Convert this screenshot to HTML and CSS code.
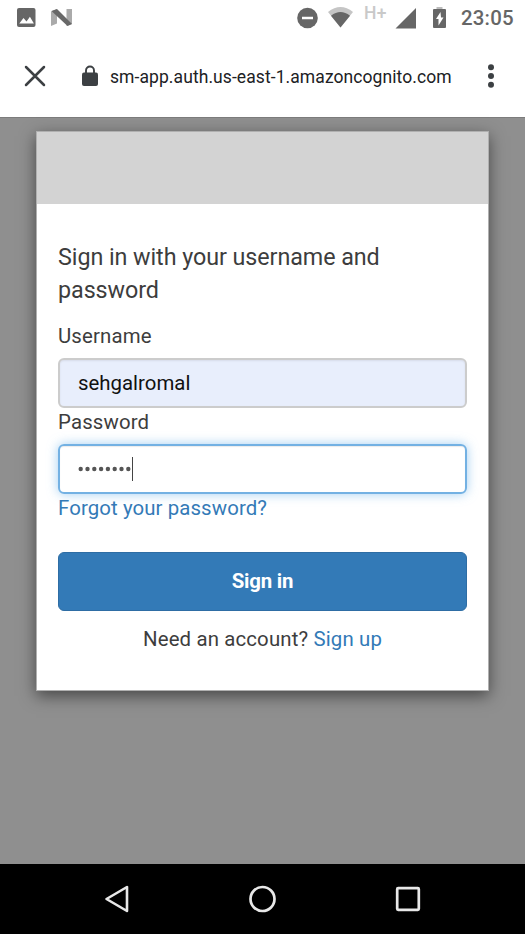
FILE: index.html
```html
<!DOCTYPE html>
<html lang="en">
<head>
<meta charset="utf-8">
<title>Sign in</title>
<link rel="stylesheet" href="styles.css">
</head>
<body>
<header class="chrome">
  <div class="status">
    <svg class="status-left" width="60" height="36" viewBox="0 0 60 36">
      <rect x="1" y="8" width="18.5" height="19" rx="2" fill="#666"/>
      <path d="M3.3 23.5 7.5 18l3 3.6 3.4-4.8 4 6.7z" fill="#fff"/>
      <path d="M35 11.5 41 9v14.500L35 26zM50.500 9h5.500v15l-5.500 2z" fill="#aaa"/>
      <path d="M35.500 11 41 9l15 15-4.500 2z" fill="#686868"/>
    </svg>
    <svg class="status-signal" width="66" height="36" viewBox="0 0 66 36">
      <circle cx="10.500" cy="18" r="10.300" fill="#666"/>
      <path d="M5 18h11" stroke="#fff" stroke-width="2.500"/>
      <path d="M31 12q12.500-10 25 0L43.500 27.500z" fill="#c5c5c5"/>
      <path d="M34 15.700q9.500-7.500 19 0L43.500 27.500z" fill="#666"/>
    </svg>
    <span class="network">H+</span>
    <svg class="status-power" width="54" height="36" viewBox="0 0 54 36">
      <path d="M-.500 28.500 20 8v20.500z" fill="#666"/>
      <path d="M40.500 7h6v2.500h-6z" fill="#bbb"/>
      <rect x="37" y="9" width="13" height="19" rx="1" fill="#666"/>
      <path d="m44.500 12-4.500 7h2.500v6.500l5-8h-2.500z" fill="#fff"/>
    </svg>
    <span class="clock">23:05</span>
  </div>
  <div class="toolbar">
    <svg class="close" width="22" height="22" viewBox="0 0 22 22"><path d="M2 2l18 18M20 2 2 20" stroke="#3c4043" stroke-width="2.500" stroke-linecap="round"/></svg>
    <svg class="lock" width="16" height="22" viewBox="0 0 16 22"><path d="M4 9V5.500a4 4 0 0 1 8 0V9" fill="none" stroke="#3c4043" stroke-width="1.900"/><rect y="7.500" width="16" height="13.500" rx="2" fill="#3c4043"/></svg>
    <span class="url">sm-app.auth.us-east-1.amazoncognito.com</span>
    <svg class="more" width="6" height="24" viewBox="0 0 6 24" fill="#3c4043"><circle cx="3" cy="3.200" r="3"/><circle cx="3" cy="12" r="3"/><circle cx="3" cy="20.800" r="3"/></svg>
  </div>
</header>
<main class="page">
  <section class="card">
    <div class="banner"></div>
    <form class="form">
      <h1 class="title">Sign in with your username and<br>password</h1>
      <label class="label first">Username</label>
      <div class="field filled"><span class="user">sehgalromal</span></div>
      <label class="label">Password</label>
      <div class="field focused"><svg class="dots" width="54" height="24" viewBox="0 0 54 24" fill="#555"><circle cx="2.700" cy="12" r="2.200"/><circle cx="9.500" cy="12" r="2.200"/><circle cx="16.300" cy="12" r="2.200"/><circle cx="23.100" cy="12" r="2.200"/><circle cx="29.900" cy="12" r="2.200"/><circle cx="36.700" cy="12" r="2.200"/><circle cx="43.500" cy="12" r="2.200"/><circle cx="50.300" cy="12" r="2.200"/></svg><i class="caret"></i></div>
      <a class="forgot">Forgot your password?</a>
      <button class="submit" type="button">Sign in</button>
      <p class="signup">Need an account? <a>Sign up</a></p>
    </form>
  </section>
</main>
<nav class="navbar">
  <svg width="26" height="30" viewBox="0 0 26 30"><path d="M23 3v24L2.500 15z" fill="none" stroke="#e8e8e8" stroke-width="2.600" stroke-linejoin="round"/></svg>
  <svg width="28" height="28" viewBox="0 0 28 28"><circle cx="13.500" cy="14" r="12" fill="none" stroke="#e8e8e8" stroke-width="2.700"/></svg>
  <svg width="26" height="26" viewBox="0 0 26 26"><rect x="2.200" y="2.200" width="21.600" height="21.600" rx="1" fill="none" stroke="#e8e8e8" stroke-width="2.700"/></svg>
</nav>
</body>
</html>
```
FILE: styles.css
```css
* { box-sizing: border-box; }
body {
  margin: 0;
  width: 525px;
  height: 934px;
  display: flex;
  flex-direction: column;
  overflow: hidden;
  font-family: Roboto, sans-serif;
  font-size: 20.4px;
  color: #3d3d3d;
}
svg { display: block; flex: none; overflow: visible; }
.chrome { height: 117px; background: #fff; }
.status { height: 36px; display: flex; padding-left: 16px; }
.status-signal { margin-left: 221px; }
.network { width: 33px; padding-left: 1px; font-size: 17.5px; font-weight: 500; line-height: 26px; color: #c9c9c9; letter-spacing: .4px; }
.clock { margin-left: 11px; font-size: 20.4px; font-weight: 500; line-height: 36px; color: #666; letter-spacing: .2px; }
.toolbar { height: 80px; display: flex; align-items: center; padding-left: 24px; }
.lock { margin-left: 36px; }
.url { width: 370px; margin-left: 12px; padding-top: 2px; font-size: 17.5px; letter-spacing: .08px; color: #202124; white-space: nowrap; }
.more { margin-left: 8px; }
.page { height: 747px; background: #8f8f8f; border-top: 1px solid #7c7c7c; padding: 13px 36px 0; }
.card {
  width: 453px;
  height: 560px;
  background: #fff;
  border: 1px solid #b0b0b0;
  box-shadow: 0 5px 15px rgba(0, 0, 0, .5);
}
.banner { height: 72px; background: #d3d3d3; }
.form { padding: 37px 21px 0; }
.title { margin: 0; font-size: 23.3px; font-weight: 400; line-height: 33px; letter-spacing: -.06px; }
.label { display: block; line-height: 29px; height: 36px; letter-spacing: .14px; }
.label.first { margin-top: 15px; }
.field {
  height: 50px;
  display: flex;
  align-items: center;
  padding-left: 18px;
  border: 2px solid #ccc;
  border-radius: 6px;
}
.filled { background: #e8eefc; color: #111; box-shadow: inset 0 1px 2px rgba(0, 0, 0, .08); }
.focused { border-color: #73b1e3; box-shadow: 0 0 11px rgba(102, 175, 233, .6), inset 0 1px 1px rgba(0, 0, 0, .08); }
.caret { width: 1px; height: 24px; background: #444; }
.forgot { display: block; line-height: 29px; letter-spacing: .1px; }
a { color: #337ab7; }
.submit {
  display: block;
  width: 100%;
  height: 59px;
  margin-top: 29px;
  padding: 0 0 1px;
  border: 1px solid #2e6da4;
  border-radius: 6px;
  background: #337ab7;
  color: #fff;
  font: 700 20.4px Roboto, sans-serif;
  letter-spacing: -.2px;
}
.signup { margin: 14px 0 0; text-align: center; line-height: 29px; letter-spacing: .14px; }
.navbar { height: 70px; background: #000; display: flex; align-items: center; justify-content: space-between; padding: 0 104px; }
```
